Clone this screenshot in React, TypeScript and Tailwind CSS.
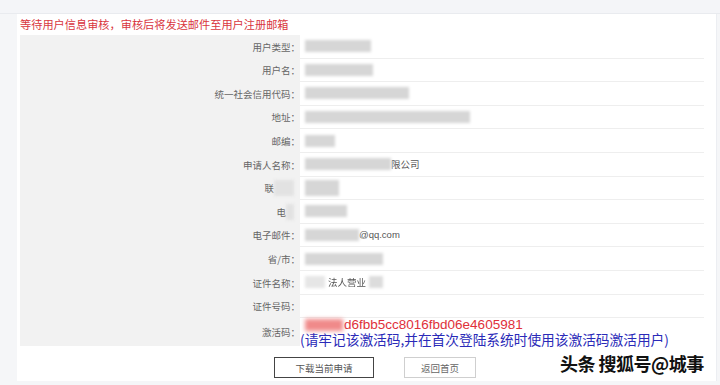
import React from "react";

const font = { fontFamily: '"Noto Sans CJK SC", "Liberation Sans", sans-serif' };

function Blur({ w, className = "" }: { w: number; className?: string }) {
  return (
    <span
      className={"inline-block h-[12px] bg-[#d6d6d6] blur-[1.5px] align-middle " + className}
      style={{ width: w }}
    />
  );
}

type Row = { label: React.ReactNode; value: React.ReactNode };

const rows: Row[] = [
  { label: "用户类型：", value: <Blur w={66} /> },
  { label: "用户名：", value: <Blur w={68} /> },
  { label: "统一社会信用代码：", value: <Blur w={104} /> },
  { label: "地址：", value: <Blur w={165} /> },
  { label: "邮编：", value: <Blur w={30} /> },
  {
    label: "申请人名称：",
    value: (
      <span className="flex items-center">
        <Blur w={86} />
        <span>限公司</span>
      </span>
    ),
  },
  {
    label: (
      <span className="flex items-center pr-[6px]">
        联<span className="inline-block h-[16px] w-[20px] bg-[#e2e2e2] blur-[1.5px]" />
      </span>
    ),
    value: <Blur w={34} className="h-[16px]" />,
  },
  {
    label: (
      <span className="flex items-center pr-[6px]">
        电<span className="inline-block h-[16px] w-[8px] bg-[#e2e2e2] blur-[1.5px]" />
      </span>
    ),
    value: <Blur w={42} />,
  },
  {
    label: "电子邮件：",
    value: (
      <span className="flex items-center">
        <Blur w={54} />
        <span style={{ fontFamily: '"Liberation Sans", sans-serif' }} className="text-[9.5px]">
          @qq.com
        </span>
      </span>
    ),
  },
  { label: "省/市：", value: <Blur w={78} /> },
  {
    label: "证件名称：",
    value: (
      <span className="flex items-center gap-[3px]">
        <Blur w={20} className="bg-[#e6e6e6]" />
        <span className="blur-[0.4px]">法人营业</span>
        <Blur w={14} className="bg-[#dcdcdc]" />
      </span>
    ),
  },
  { label: "证件号码：", value: null },
];

export default function App() {
  return (
    <div className="relative h-[385px] w-[720px] overflow-hidden bg-[#f5f6f8]" style={font}>
      <div className="h-[14px] border-b border-[#e9ebef] bg-[#f4f5f8]" />
      <div className="ml-[17px] mr-[3px] h-[367px] border-r border-[#eceef2] bg-white pl-[3px] pr-[12px]">
        <div className="flex h-[21px] items-center text-[11.2px] leading-none text-[#d9363e]">
          等待用户信息审核，审核后将发送邮件至用户注册邮箱
        </div>
        <div className="flex flex-col">
          {rows.map((r, i) => (
            <div key={i} className="flex h-[23.6px]">
              <div className="flex w-[280px] items-center justify-end bg-[#f2f2f2] text-[9.5px] text-[#666]">
                {r.label}
              </div>
              <div className="flex flex-1 items-center border-b border-[#eeeeee] pl-[5px] text-[9.5px] text-[#555]">
                {r.value}
              </div>
            </div>
          ))}
          <div className="flex h-[28px]">
            <div className="flex w-[280px] items-center justify-end bg-[#f2f2f2] text-[9.5px] text-[#666]">
              激活码：
            </div>
            <div className="flex flex-1 flex-col justify-center">
              <div
                className="flex h-[14px] items-center pl-[5px] text-[13.5px] leading-[14px] text-[#e0303a]"
                style={{ fontFamily: '"Liberation Sans", sans-serif' }}
              >
                <span className="mr-[1px] inline-block h-[12px] w-[38px] bg-[#f08a8a] blur-[2px]" />
                <span>d6fbb5cc8016fbd06e4605981</span>
              </div>
              <div className="h-[14px] text-[13.7px] leading-[14px] text-[#2a2ab8]">
                (请牢记该激活码,并在首次登陆系统时使用该激活码激活用户)
              </div>
            </div>
          </div>
        </div>
        <div className="flex h-[33px] items-start justify-center gap-[30px] pl-[26px] pt-[11px]">
          <div className="flex h-[21px] w-[100px] items-center justify-center border border-[#444] text-[9.5px] text-[#555]">
            下载当前申请
          </div>
          <div className="flex h-[21px] w-[72px] items-center justify-center border border-[#cfcfcf] text-[9.5px] text-[#666]">
            返回首页
          </div>
        </div>
      </div>
      <div
        className="absolute left-[560px] top-[350px] text-[18px] font-bold tracking-[-0.5px] text-[#111]"
        style={{ textShadow: "0 0 2px #fff, 0 0 3px #fff" }}
      >
        头条 搜狐号@城事
      </div>
    </div>
  );
}
